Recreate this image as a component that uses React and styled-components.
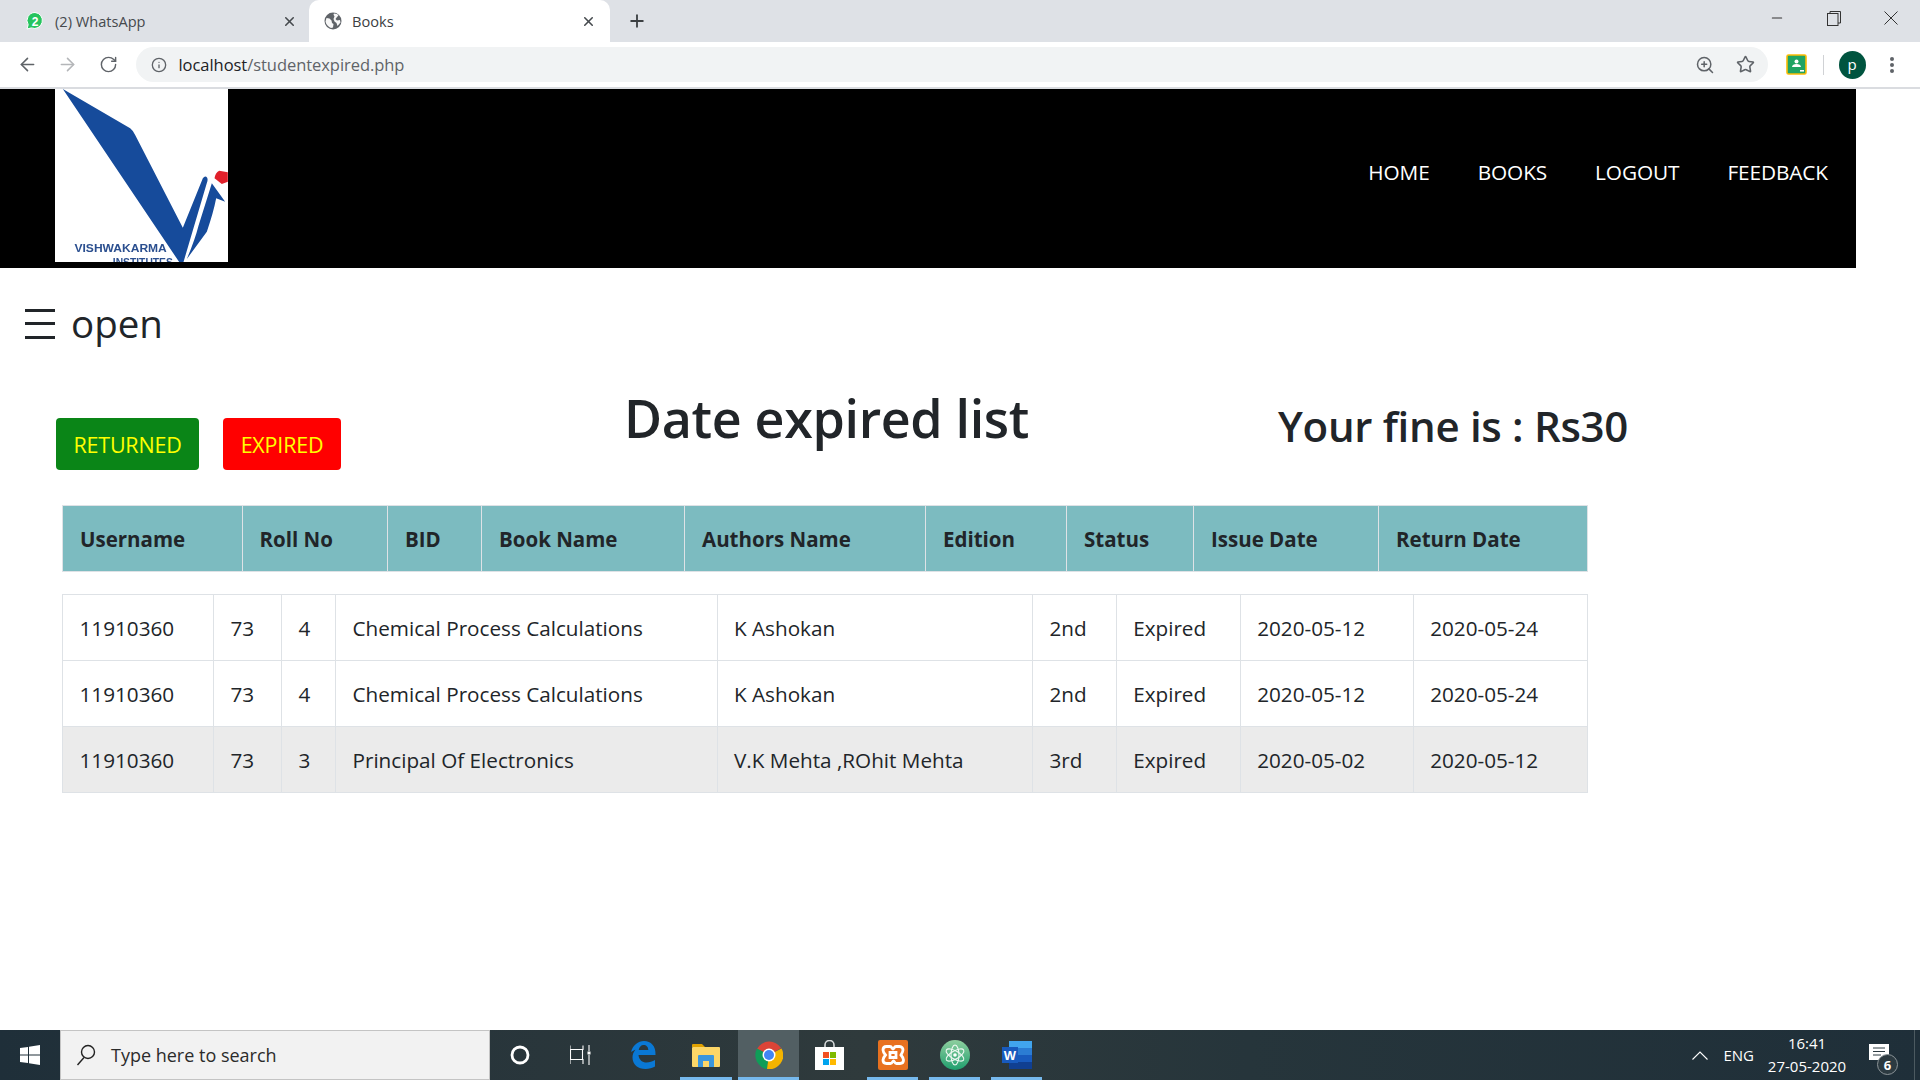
import React from 'react';
import styled, { createGlobalStyle } from 'styled-components';
import { ArrowLeft, ArrowRight, RotateCw, Info, ZoomIn, Star, X, Plus, Minus } from 'lucide-react';

const Global = createGlobalStyle`
  html, body { margin: 0; padding: 0; background: #fff; overflow: hidden; }
  * { box-sizing: border-box; }
  body { font-family: "Open Sans", "Noto Sans", "Liberation Sans", sans-serif; color: #212529; }
`;

const Page = styled.div`
  width: 1920px; height: 1080px; display: flex; flex-direction: column; background: #fff; overflow: hidden;
`;

/* Browser chrome */
const TabStrip = styled.div`
  height: 42px; background: #dee1e6; display: flex; align-items: stretch; flex-shrink: 0;
`;
const Tab = styled.div`
  width: ${p => p.$w}px; padding: 0 ${p => p.$pr}px 0 ${p => p.$pl}px;
  display: flex; align-items: center; gap: 10px;
  background: ${p => p.$active ? '#fff' : 'transparent'};
  border-radius: 10px 10px 0 0;
  font-size: 14.6px; color: ${p => p.$active ? '#3c4043' : '#45494d'};
`;
const TabTitle = styled.span`flex: 1; white-space: nowrap;`;
const NewTab = styled.div`width: 54px; display: flex; align-items: center; justify-content: center; color: #3c4043;`;
const WindowControls = styled.div`
  margin-left: auto; display: flex; align-items: center; color: #333; padding: 0 1px 6px 0;
`;
const WinBtn = styled.div`width: 57px; display: flex; justify-content: center; align-items: center;`;

const Toolbar = styled.div`
  height: 47px; flex-shrink: 0; background: #fff; border-bottom: 2px solid #dadce0;
  display: flex; align-items: center; color: #5f6368;
`;
const NavIcon = styled.div`
  width: 40.5px; display: flex; justify-content: center; color: ${p => p.$dim ? '#b4b6b9' : '#5f6368'};
  &:first-child { margin-left: 7px; }
`;
const Omnibox = styled.div`
  width: 1632px; height: 35px; margin-left: 7px; border-radius: 18px; background: #f1f3f4;
  display: flex; align-items: center; padding: 0 13px 0 15px; gap: 12px;
`;
const Url = styled.div`
  flex: 1; font-size: 16.5px; color: #5f6368; letter-spacing: -0.05px; white-space: nowrap;
  b { font-weight: 400; color: #202124; }
`;
const OmniActions = styled.div`display: flex; align-items: center; gap: 21px;`;
const Extensions = styled.div`display: flex; align-items: center; margin-left: 18px;`;
const Divider = styled.div`width: 1px; height: 20px; background: #d0d2d5; margin: 0 15px 0 16px;`;
const Avatar = styled.div`
  width: 27px; height: 28px; border-radius: 50%; background: #00543f; color: #fff;
  display: flex; align-items: center; justify-content: center; font-size: 15px; padding-bottom: 2px;
`;
const Kebab = styled.div`margin-left: 23px; display: flex;`;

/* Site header */
const SiteHeader = styled.header`
  width: 1856px; height: 179px; flex-shrink: 0; background: #000;
  display: flex; align-items: flex-start; justify-content: space-between; padding: 0 28px 0 55px;
`;
const LogoBox = styled.div`width: 173px; height: 173px; background: #fff; display: flex; overflow: hidden;`;
const LogoSvg = styled.svg`width: 173px; height: 173px; display: block; filter: blur(0.35px);`;
const LogoText = styled.text`font-family: "Liberation Sans", sans-serif; font-weight: 700; fill: #2b4f8f;`;
const Nav = styled.nav`display: flex; gap: 48px; padding-top: 68px;`;
const NavLink = styled.a`color: #fff; font-size: 20.8px; line-height: 30px; letter-spacing: -0.1px; white-space: nowrap;`;

/* Page content */
const OpenRow = styled.div`
  height: 48px; margin-top: 31px; padding-left: 25px; display: flex; align-items: center; gap: 16px;
  font-size: 38.5px; line-height: 48px; flex-shrink: 0;
`;
const Burger = styled.svg`width: 30px; height: 30px; display: block; margin-top: 2px;`;

const ActionRow = styled.div`
  margin-top: 38px; height: 120px; display: grid; grid-template-columns: 624px 654px auto; flex-shrink: 0;
`;
const Buttons = styled.div`display: flex; gap: 24px; padding: 33px 0 0 56px; align-items: flex-start;`;
const ActionBtn = styled.button`
  height: 52px; width: ${p => p.$w}px; border: 0; border-radius: 4px; padding: 1px 0 0;
  background: ${p => p.$bg}; color: #ff0; font: 400 21.5px/30px "Open Sans", sans-serif; letter-spacing: -0.2px;
`;
const Title = styled.h1`
  margin: -2px 0 0; font-size: 52px; font-weight: 600; line-height: 70px; white-space: nowrap; letter-spacing: -0.35px;
`;
const Fine = styled.h2`
  margin: 19px 0 0; font-size: 42px; font-weight: 600; line-height: 44px; white-space: nowrap; letter-spacing: -0.3px;
`;

const TableWrap = styled.div`margin-left: 62px; width: 1525px; flex-shrink: 0;`;
const DataTable = styled.table`
  width: 100%; table-layout: fixed; border-collapse: collapse; margin-bottom: ${p => p.$mb || 0}px;
`;
const HeadCell = styled.th`
  height: 66px; padding: 0 17px; background: #7cbbc0; border: 1px solid #dee2e6; text-align: left;
  font-size: 20.5px; font-weight: 700; white-space: nowrap;
`;
const Cell = styled.td`
  height: 66px; padding: 0 16.5px; border: 1px solid #dee2e6; font-size: 20.7px; font-weight: 400;
  white-space: nowrap; background: ${p => p.$alt ? '#ebebeb' : '#fff'};
`;

/* Taskbar */
const Taskbar = styled.div`
  margin-top: auto; height: 50px; flex-shrink: 0; display: flex; align-items: stretch;
  background: linear-gradient(90deg, #1f2f39 0%, #2f3a3c 45%, #26353b 65%, #1f2f39 100%);
`;
const StartBtn = styled.div`width: 60px; display: flex; align-items: center; justify-content: center;`;
const SearchBox = styled.div`
  width: 430px; background: #f2f2f2; border: 1px solid #c4c4c4;
  display: flex; align-items: center; gap: 15px; padding-left: 15px; color: #2b2b2b;
  font-size: 18px;
`;
const TaskItems = styled.div`display: flex; align-items: stretch; padding-left: 5px;`;
const TaskItem = styled.div`
  width: ${p => p.$w || 62}px; margin-left: ${p => p.$ml || 0}px;
  display: flex; align-items: center; justify-content: center;
  background: ${p => p.$active ? '#525f63' : 'transparent'};
  border-bottom: 3px solid ${p => p.$open ? '#76b9ed' : 'transparent'};
  padding-top: 3px;
`;
const Tray = styled.div`
  margin-left: auto; margin-right: 5px; display: flex; align-items: center; color: #fff; padding-right: 11px;
  border-right: 1px solid #4c5a60;
`;
const Lang = styled.div`font-size: 15px; margin-left: 15px;`;
const Clock = styled.div`
  font-size: 15px; line-height: 23px; text-align: center; margin-left: 9px; width: 88px; white-space: nowrap;
`;
const Notify = styled.div`margin-left: 18px; position: relative; width: 34px; height: 36px; padding-top: 7px;`;
const Badge = styled.div`
  position: absolute; left: 8px; top: 17px; width: 21px; height: 21px; border-radius: 50%;
  background: #2c3a41; border: 1px solid #8c9498; color: #fff; font-size: 13px; font-weight: 700;
  display: flex; align-items: center; justify-content: center;
`;

const headCols = [179.5, 145.5, 94, 203, 241, 141, 127, 185, 209];
const bodyCols = [151, 68, 54, 381.5, 315.5, 83.7, 124, 173, 174.3];
const heads = ['Username', 'Roll No', 'BID', 'Book Name', 'Authors Name', 'Edition', 'Status', 'Issue Date', 'Return Date'];
const rows = [
  ['11910360', '73', '4', 'Chemical Process Calculations', 'K Ashokan', '2nd', 'Expired', '2020-05-12', '2020-05-24'],
  ['11910360', '73', '4', 'Chemical Process Calculations', 'K Ashokan', '2nd', 'Expired', '2020-05-12', '2020-05-24'],
  ['11910360', '73', '3', 'Principal Of Electronics', 'V.K Mehta ,ROhit Mehta', '3rd', 'Expired', '2020-05-02', '2020-05-12'],
];

const Cols = ({ widths }) => (
  <colgroup>{widths.map((w, i) => <col key={i} style={{ width: w }} />)}</colgroup>
);

const WhatsAppIcon = () => (
  <svg width="20" height="20" viewBox="0 0 20 20">
    <path d="M10 1.5a8 8 0 0 0-6.8 12.2L2 18l4.4-1.1A8 8 0 1 0 10 1.5z" fill="#25c45e" stroke="#fff" strokeWidth="1" />
    <text x="10" y="14.5" textAnchor="middle" fontSize="12" fontWeight="700" fill="#fff" fontFamily="Liberation Sans">2</text>
  </svg>
);
const GlobeIcon = () => (
  <svg width="18" height="18" viewBox="0 0 18 18">
    <circle cx="9" cy="9" r="8.5" fill="#5f6368" />
    <path d="M2.500 6l3 .5 2 2 .5 2.500 1.500 1-.5 3.500-2 .5C4.500 15 2 12.500 1.500 9.500zM10 1.500l3 .5 1.500 1.500-1.500 1.500-1.500 2 1.500 1.500 3-.5.5 2.500-3 3.500-1-3-2-1.500-1-2.500 1-2.500-1-2z" fill="#fff" opacity=".95" />
  </svg>
);
const ClassroomIcon = () => (
  <svg width="21" height="21" viewBox="0 0 21 21">
    <rect x="1" y="1" width="19" height="19" rx="1.5" fill="#1fa463" stroke="#fbbc04" strokeWidth="1.6" />
    <circle cx="10.5" cy="7.5" r="2" fill="#fff" />
    <path d="M6 13c0-2 2-3 4.500-3s4.500 1 4.500 3z" fill="#fff" />
    <rect x="14" y="16" width="4" height="1.6" fill="#fff" />
  </svg>
);
const VMenu = () => (
  <svg width="6" height="18" viewBox="0 0 6 18" fill="#5f6368">
    <circle cx="3" cy="3" r="2" /><circle cx="3" cy="9" r="2" /><circle cx="3" cy="15" r="2" />
  </svg>
);
const RestoreIcon = () => (
  <svg width="14" height="15" viewBox="0 0 14 15" fill="none" stroke="#333" strokeWidth="1">
    <rect x="0.5" y="2.500" width="10.500" height="12" /><path d="M3 2.500V.5h10.500v11.500H11" />
  </svg>
);
const CloseThin = () => (
  <svg width="14" height="14" viewBox="0 0 14 14" stroke="#333" strokeWidth="1"><path d="M.5.5l13 13M13.500.5l-13 13" /></svg>
);

const Logo = () => (
  <LogoSvg viewBox="0 0 518 519">
    <path d="M23 0L225 118Q235 126 240 138L383 416L443 268Q450 258 456 266Q459 272 455 282L385 519H372Z" fill="#164b9b" />
    <path d="M470 283L510 338L483 328Q475 370 455 428L395 510Q420 450 430 410Z" fill="#164b9b" />
    <path d="M492 245L518 250V278L500 285L478 268Q480 252 492 245Z" fill="#e0202a" />
    <LogoText x="58" y="490" fontSize="33" textLength="277" lengthAdjust="spacingAndGlyphs">VISHWAKARMA</LogoText>
    <LogoText x="173" y="530" fontSize="30" textLength="180" lengthAdjust="spacingAndGlyphs">INSTITUTES</LogoText>
  </LogoSvg>
);

const WinLogo = () => (
  <svg width="20" height="20" viewBox="0 0 20 20" fill="#fff">
    <path d="M0 3l8-1.100v7.600H0zM9 1.700L20 0v9.500H9zM0 10.500h8v7.600L0 17zM9 10.500h11V20L9 18.300z" />
  </svg>
);
const SearchGlyph = () => (
  <svg width="20" height="22" viewBox="0 0 20 22" fill="none" stroke="#222" strokeWidth="1.4">
    <circle cx="12" cy="8" r="6.500" /><path d="M8 13.500L1.500 21" />
  </svg>
);
const CortanaIcon = () => (
  <svg width="20" height="20" viewBox="0 0 20 20"><circle cx="10" cy="10" r="8" fill="none" stroke="#fff" strokeWidth="2.800" /></svg>
);
const TaskViewIcon = () => (
  <svg width="21" height="20" viewBox="0 0 21 20" fill="none" stroke="#fff" strokeWidth="1.100">
    <path d="M0 0.500v4h13v-4M0.500 4.500h12v10h-12zM0 19v-4.500h13V19M19 0v6M19 10v10" />
    <rect x="17.500" y="6.500" width="3" height="3" fill="#fff" stroke="none" />
  </svg>
);
const EdgeIcon = () => (
  <svg width="26" height="28" viewBox="0 0 26 28">
    <path d="M1 11C3 4 8 0 14 0c7 0 12 5 11.500 14H8.500c.5 5 4 7.500 8 7.500 3 0 6-1 8.500-2.500v6.500c-2.500 1.500-6 2.500-9.500 2.500C8 28 2.500 23.500 2.500 16.500c0-3 1-5.500 3-8-2 1-3.500 2-4.500 2.500zM8.700 9h9.600c0-3-2-5-4.700-5-2.500 0-4.500 2-4.900 5z" fill="#0a78d4" />
  </svg>
);
const FolderIcon = () => (
  <svg width="28" height="24" viewBox="0 0 28 24">
    <path d="M0 2q0-1 1-1h9l3 3h-13z" fill="#e0a100" />
    <rect x="0" y="4" width="28" height="20" rx="1" fill="#fcd667" />
    <path d="M6 24V13q0-1 1-1h14q1 0 1 1v11h-5v-6h-6v6z" fill="#3a96dd" />
  </svg>
);
const ChromeIcon = () => (
  <svg width="28" height="28" viewBox="0 0 28 28">
    <path d="M14 14L2 8a14 14 0 0 1 24.100-1z" fill="#db4437" />
    <path d="M14 14L2 7.500A14 14 0 0 0 12 28z" fill="#0f9d58" />
    <path d="M14 14L26.500 7.500A14 14 0 0 1 12 28z" fill="#f4b400" />
    <circle cx="14" cy="14" r="6.500" fill="#fff" /><circle cx="14" cy="14" r="5" fill="#4285f4" />
  </svg>
);
const StoreIcon = () => (
  <svg width="29" height="30" viewBox="0 0 29 30">
    <path d="M10 8V5a4.500 4.500 0 0 1 9 0v3" fill="none" stroke="#d6d9da" strokeWidth="1.600" />
    <path d="M0 7h29v23H0z" fill="#fff" />
    <rect x="8" y="12" width="6" height="6" fill="#f25022" /><rect x="15" y="12" width="6" height="6" fill="#7fba00" />
    <rect x="8" y="19" width="6" height="6" fill="#00a4ef" /><rect x="15" y="19" width="6" height="6" fill="#ffb900" />
  </svg>
);
const XamppIcon = () => (
  <svg width="30" height="30" viewBox="0 0 30 30">
    <rect width="30" height="30" rx="2" fill="#e8711f" />
    <path d="M8.500 6.500h3.500c2 0 2 2.500 3 2.500s1-2.500 3-2.500h3.500c2.500 0 3.500 2 3.500 3.500S23 15 23 15s2.500 3 2.500 5-1 3.500-3.500 3.500h-3.500c-2 0-2-2.500-3-2.500s-1 2.500-3 2.500H8.500C6 23.500 5 22 5 20s2.500-5 2.500-5S5 12 5 10s1-3.500 3.500-3.500zM12 12.500h6v5h-6z" fill="none" stroke="#fff" strokeWidth="2.800" />
  </svg>
);
const AtomIcon = () => (
  <svg width="30" height="30" viewBox="0 0 30 30">
    <defs><linearGradient id="atomg" x1="0" y1="0" x2="0" y2="1"><stop offset="0" stopColor="#8fcf9f" /><stop offset="1" stopColor="#1f9f6e" /></linearGradient></defs>
    <circle cx="15" cy="15" r="15" fill="url(#atomg)" />
    <g fill="none" stroke="#fff" strokeWidth="1.100" opacity=".9">
      <ellipse cx="15" cy="15" rx="10" ry="4" transform="rotate(30 15 15)" />
      <ellipse cx="15" cy="15" rx="10" ry="4" transform="rotate(-30 15 15)" />
      <ellipse cx="15" cy="15" rx="10" ry="4" transform="rotate(90 15 15)" />
    </g>
    <circle cx="15" cy="15" r="1.800" fill="#fff" />
  </svg>
);
const WordIcon = () => (
  <svg width="30" height="28" viewBox="0 0 30 28">
    <rect x="7" y="0" width="23" height="7" fill="#41a5ee" /><rect x="7" y="7" width="23" height="7" fill="#2b7cd3" />
    <rect x="7" y="14" width="23" height="7" fill="#185abd" /><rect x="7" y="21" width="23" height="7" fill="#103f91" />
    <rect x="0" y="6" width="16" height="16" fill="#185abd" />
    <text x="8" y="19" textAnchor="middle" fontSize="13" fontWeight="700" fill="#fff" fontFamily="Liberation Sans">W</text>
  </svg>
);
const Chevron = () => (
  <svg width="16" height="9" viewBox="0 0 16 9" fill="none" stroke="#fff" strokeWidth="1.100"><path d="M.5 8.500L8 1l7.500 7.500" /></svg>
);
const NotifyIcon = () => (
  <svg width="20" height="18" viewBox="0 0 20 18">
    <path d="M0 0h20v16H0z" fill="#fff" />
    <path d="M4 4h12M4 7.500h12M4 11h8" stroke="#2c3a41" strokeWidth="1" />
  </svg>
);

export default function App() {
  return (
    <Page>
      <Global />
      <TabStrip>
        <Tab $w={309} $pl={25} $pr={12}>
          <WhatsAppIcon /><TabTitle>(2) WhatsApp</TabTitle><X size={15} strokeWidth={2.5} color="#45494d" />
        </Tab>
        <Tab $active $w={301} $pl={15} $pr={14}>
          <GlobeIcon /><TabTitle>Books</TabTitle><X size={15} strokeWidth={2.5} color="#45494d" />
        </Tab>
        <NewTab><Plus size={20} strokeWidth={2.2} /></NewTab>
        <WindowControls>
          <WinBtn><Minus size={16} strokeWidth={1.6} color="#333" /></WinBtn>
          <WinBtn><RestoreIcon /></WinBtn>
          <WinBtn><CloseThin /></WinBtn>
        </WindowControls>
      </TabStrip>
      <Toolbar>
        <NavIcon><ArrowLeft size={21} strokeWidth={1.8} /></NavIcon>
        <NavIcon $dim><ArrowRight size={21} strokeWidth={1.8} /></NavIcon>
        <NavIcon><RotateCw size={19} strokeWidth={1.8} /></NavIcon>
        <Omnibox>
          <Info size={16} strokeWidth={2} color="#5f6368" />
          <Url><b>localhost</b>/studentexpired.php</Url>
          <OmniActions>
            <ZoomIn size={20} strokeWidth={1.8} color="#5f6368" />
            <Star size={19} strokeWidth={2} color="#5f6368" />
          </OmniActions>
        </Omnibox>
        <Extensions>
          <ClassroomIcon />
          <Divider />
          <Avatar>p</Avatar>
          <Kebab><VMenu /></Kebab>
        </Extensions>
      </Toolbar>

      <SiteHeader>
        <LogoBox><Logo /></LogoBox>
        <Nav>
          <NavLink>HOME</NavLink>
          <NavLink>BOOKS</NavLink>
          <NavLink>LOGOUT</NavLink>
          <NavLink>FEEDBACK</NavLink>
        </Nav>
      </SiteHeader>

      <OpenRow>
        <Burger viewBox="0 0 30 30" fill="#212529"><rect y="0" width="30" height="3" /><rect y="13" width="30" height="3" /><rect y="27" width="30" height="3" /></Burger>
        <span>open</span>
      </OpenRow>

      <ActionRow>
        <Buttons>
          <ActionBtn $bg="#0a8517" $w={143}>RETURNED</ActionBtn>
          <ActionBtn $bg="#ff0000" $w={118}>EXPIRED</ActionBtn>
        </Buttons>
        <Title>Date expired list</Title>
        <Fine>Your fine is : Rs30</Fine>
      </ActionRow>

      <TableWrap>
        <DataTable $mb={22}>
          <Cols widths={headCols} />
          <thead><tr>{heads.map(h => <HeadCell key={h}>{h}</HeadCell>)}</tr></thead>
        </DataTable>
        <DataTable>
          <Cols widths={bodyCols} />
          <tbody>
            {rows.map((r, i) => (
              <tr key={i}>{r.map((c, j) => <Cell key={j} $alt={i === 2}>{c}</Cell>)}</tr>
            ))}
          </tbody>
        </DataTable>
      </TableWrap>

      <Taskbar>
        <StartBtn><WinLogo /></StartBtn>
        <SearchBox><SearchGlyph /><span>Type here to search</span></SearchBox>
        <TaskItems>
          <TaskItem $w={50}><CortanaIcon /></TaskItem>
          <TaskItem $w={70}><TaskViewIcon /></TaskItem>
          <TaskItem $w={56}><EdgeIcon /></TaskItem>
          <TaskItem $w={52} $ml={9} $open><FolderIcon /></TaskItem>
          <TaskItem $w={61} $ml={6} $active $open><ChromeIcon /></TaskItem>
          <TaskItem $w={60}><StoreIcon /></TaskItem>
          <TaskItem $w={51} $ml={8} $open><XamppIcon /></TaskItem>
          <TaskItem $w={51} $ml={11} $open><AtomIcon /></TaskItem>
          <TaskItem $w={51} $ml={11} $open><WordIcon /></TaskItem>
        </TaskItems>
        <Tray>
          <Chevron />
          <Lang>ENG</Lang>
          <Clock>16:41<br />27-05-2020</Clock>
          <Notify><NotifyIcon /><Badge>6</Badge></Notify>
        </Tray>
      </Taskbar>
    </Page>
  );
}
